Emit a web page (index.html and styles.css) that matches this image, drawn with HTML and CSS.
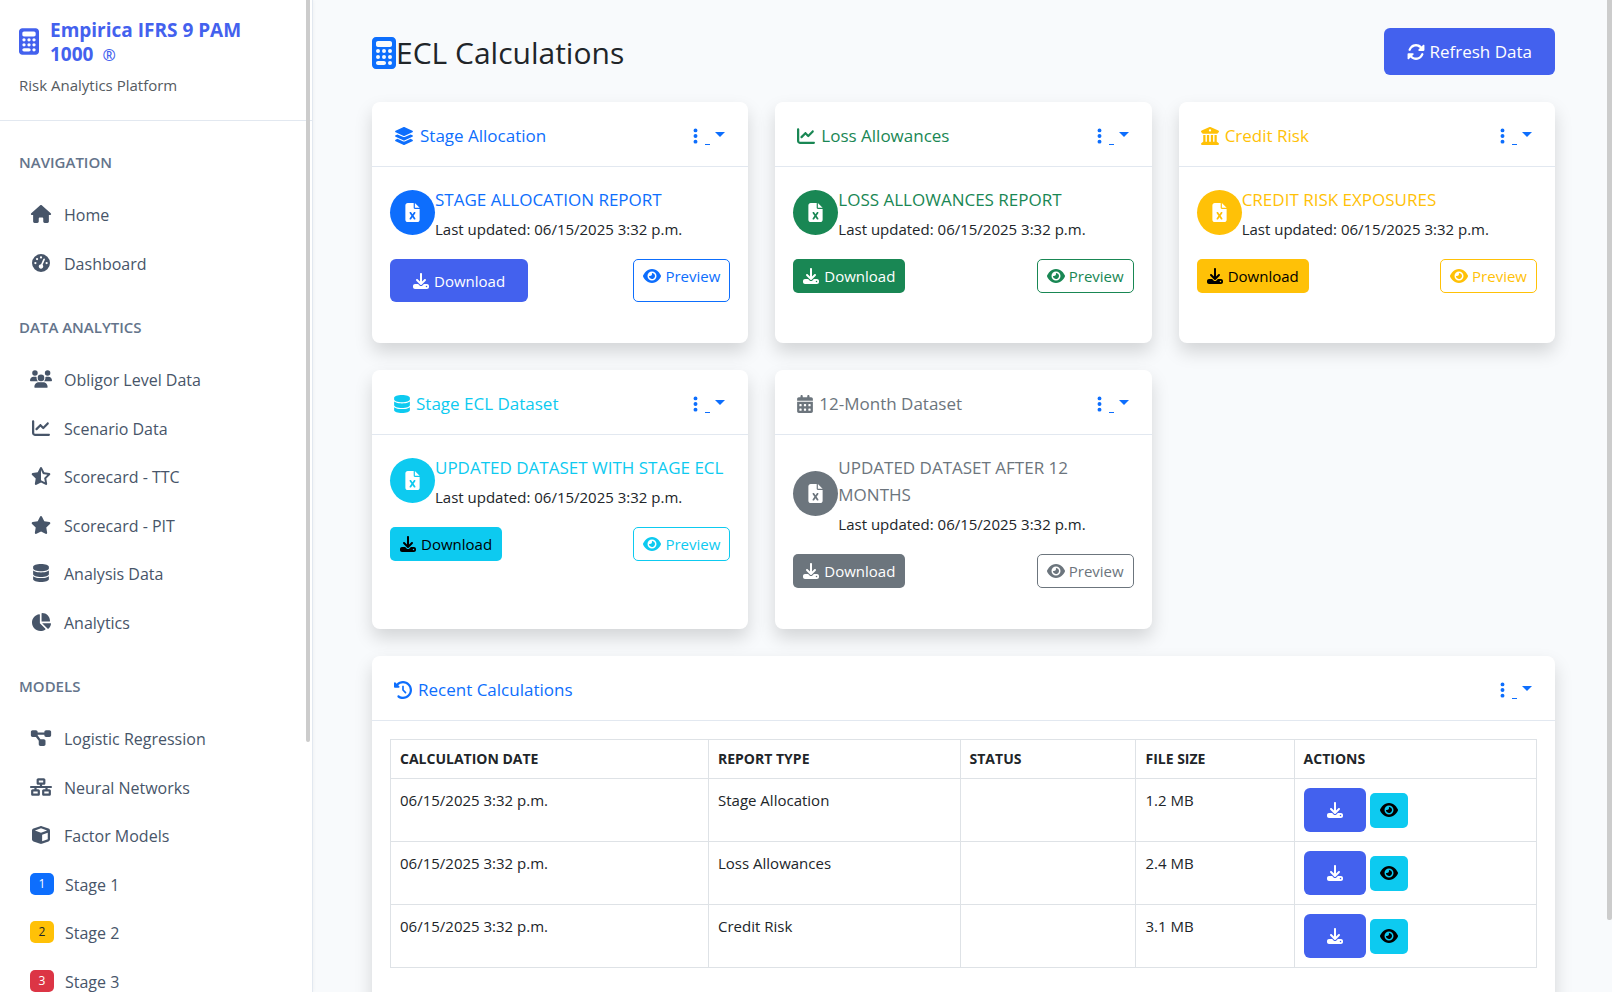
FILE: index.html
```html
<!DOCTYPE html>
<html lang="en">
<head>
<meta charset="utf-8">
<meta name="viewport" content="width=device-width, initial-scale=1">
<title>ECL Calculations</title>
<link rel="stylesheet" href="styles.css">
</head>
<body>
<svg class="sprite" aria-hidden="true">
<symbol id="calculator" viewBox="0 0 384 512"><path d="M64 0C28.700 0 0 28.700 0 64V448c0 35.300 28.700 64 64 64H320c35.300 0 64-28.700 64-64V64c0-35.300-28.700-64-64-64H64zM96 64H288c17.700 0 32 14.300 32 32v32c0 17.700-14.300 32-32 32H96c-17.700 0-32-14.300-32-32V96c0-17.700 14.300-32 32-32zm32 160a32 32 0 1 1 -64 0 32 32 0 1 1 64 0zM96 352a32 32 0 1 1 0-64 32 32 0 1 1 0 64zM64 416c0-17.700 14.300-32 32-32h96c17.700 0 32 14.300 32 32s-14.300 32-32 32H96c-17.700 0-32-14.300-32-32zM192 256a32 32 0 1 1 0-64 32 32 0 1 1 0 64zm32 64a32 32 0 1 1 -64 0 32 32 0 1 1 64 0zm64-64a32 32 0 1 1 0-64 32 32 0 1 1 0 64zm32 64a32 32 0 1 1 -64 0 32 32 0 1 1 64 0zM288 448a32 32 0 1 1 0-64 32 32 0 1 1 0 64z"/></symbol>
<symbol id="home" viewBox="0 0 576 512"><path d="M575.800 255.500c0 18-15 32.100-32 32.100h-32l.7 160.200c0 2.700-.2 5.400-.5 8.100V472c0 22.100-17.900 40-40 40H456c-1.100 0-2.200 0-3.300-.1c-1.400 .1-2.800 .1-4.200 .1H416 392c-22.100 0-40-17.900-40-40V448 384c0-17.700-14.300-32-32-32H256c-17.700 0-32 14.300-32 32v64 24c0 22.100-17.900 40-40 40H160 128.100c-1.500 0-3-.1-4.500-.2c-1.200 .1-2.400 .2-3.600 .2H104c-22.100 0-40-17.900-40-40V360c0-.9 0-1.900 .1-2.800V287.600H32c-18 0-32-14-32-32.100c0-9 3-17 10-24L266.400 8c7-7 15-8 22-8s15 2 21 7L564.800 231.500c8 7 12 15 11 24z"/></symbol>
<symbol id="gauge" viewBox="0 0 512 512"><path d="M0 256a256 256 0 1 1 512 0A256 256 0 1 1 0 256zM288 96a32 32 0 1 0 -64 0 32 32 0 1 0 64 0zM256 416c35.300 0 64-28.700 64-64c0-17.400-6.900-33.100-18.100-44.600L366 161.700c5.300-12.100-.2-26.300-12.300-31.600s-26.300 .2-31.600 12.300L257.900 288c-.6 0-1.300 0-1.900 0c-35.300 0-64 28.700-64 64s28.700 64 64 64zM176 144a32 32 0 1 0 -64 0 32 32 0 1 0 64 0zM96 288a32 32 0 1 0 0-64 32 32 0 1 0 0 64zm352-32a32 32 0 1 0 -64 0 32 32 0 1 0 64 0z"/></symbol>
<symbol id="users" viewBox="0 0 640 512"><path d="M144 0a80 80 0 1 1 0 160A80 80 0 1 1 144 0zM512 0a80 80 0 1 1 0 160A80 80 0 1 1 512 0zM0 298.700C0 239.800 47.800 192 106.700 192h42.700c15.900 0 31 3.500 44.600 9.700c-1.300 7.200-1.900 14.700-1.900 22.300c0 38.200 16.800 72.500 43.300 96c-.2 0-.4 0-.7 0H21.300C9.600 320 0 310.400 0 298.700zM405.300 320c-.2 0-.4 0-.7 0c26.600-23.500 43.300-57.800 43.300-96c0-7.600-.7-15-1.900-22.300c13.600-6.300 28.700-9.700 44.600-9.700h42.700C592.200 192 640 239.800 640 298.700c0 11.800-9.600 21.300-21.300 21.300H405.300zM224 224a96 96 0 1 1 192 0 96 96 0 1 1 -192 0zM128 485.300C128 411.700 187.700 352 261.300 352H378.700C452.300 352 512 411.700 512 485.300c0 14.700-11.900 26.700-26.700 26.700H154.700c-14.700 0-26.700-11.900-26.700-26.700z"/></symbol>
<symbol id="chart-line" viewBox="0 0 512 512"><path d="M64 64c0-17.700-14.300-32-32-32S0 46.300 0 64V400c0 44.200 35.800 80 80 80H480c17.700 0 32-14.300 32-32s-14.300-32-32-32H80c-8.800 0-16-7.200-16-16V64zm406.600 86.600c12.500-12.500 12.500-32.800 0-45.300s-32.800-12.500-45.300 0L320 210.700l-57.400-57.400c-12.500-12.500-32.800-12.500-45.300 0l-112 112c-12.500 12.500-12.500 32.800 0 45.300s32.800 12.500 45.300 0L240 221.300l57.400 57.400c12.500 12.500 32.800 12.500 45.300 0l128-128z"/></symbol>
<symbol id="star" viewBox="0 0 576 512"><path d="M316.900 18C311.600 7 300.400 0 288.100 0s-23.400 7-28.800 18L195 150.300 51.400 171.500c-12 1.800-22 10.200-25.700 21.700s-.7 24.200 7.900 32.700L137.800 329 113.200 474.700c-2 12 3 24.200 12.900 31.300s23 8 33.800 2.300l128.300-68.500 128.300 68.500c10.800 5.700 23.900 4.900 33.800-2.300s14.900-19.300 12.900-31.300L438.500 329 542.700 225.900c8.600-8.500 11.700-21.200 7.900-32.700s-13.700-19.900-25.700-21.700L381.200 150.300 316.900 18z"/></symbol>
<symbol id="star-half" viewBox="0 0 576 512"><path fill-rule="evenodd" d="M316.900 18C311.600 7 300.400 0 288.100 0s-23.400 7-28.800 18L195 150.300 51.400 171.500c-12 1.800-22 10.200-25.700 21.700s-.7 24.200 7.900 32.700L137.800 329 113.200 474.700c-2 12 3 24.200 12.900 31.300s23 8 33.800 2.300l128.300-68.500 128.300 68.500c10.800 5.700 23.900 4.900 33.800-2.300s14.900-19.300 12.900-31.300L438.500 329 542.700 225.900c8.600-8.500 11.700-21.200 7.900-32.700s-13.700-19.900-25.700-21.700L381.200 150.300 316.900 18zM288 376.400l.1-.1 26.400 14.100 85.200 45.500-16.500-97.600-4.800-28.700 20.700-20.500 70.100-69.300-96.100-14.200-29.300-4.300-12.900-26.600L288.100 86.900l-.1 .3V376.400z"/></symbol>
<symbol id="database" viewBox="0 0 448 512"><path d="M448 80v48c0 44.200-100.300 80-224 80S0 172.200 0 128V80C0 35.800 100.300 0 224 0S448 35.800 448 80zM393.200 214.700c20.800-7.400 39.900-16.900 54.800-28.600V288c0 44.200-100.300 80-224 80S0 332.200 0 288V186.100c14.900 11.800 34 21.200 54.800 28.600C99.700 230.700 159.500 240 224 240s124.300-9.300 169.200-25.300zM0 346.100c14.900 11.800 34 21.200 54.800 28.600C99.700 390.700 159.500 400 224 400s124.300-9.300 169.200-25.300c20.800-7.400 39.900-16.900 54.800-28.600V432c0 44.200-100.300 80-224 80S0 476.200 0 432V346.100z"/></symbol>
<symbol id="chart-pie" viewBox="0 0 576 512"><path d="M304 240V16.600c0-9 7-16.600 16-16.600C443.700 0 544 100.300 544 224c0 9-7.600 16-16.600 16H304zM32 272C32 150.700 122.100 50.300 239 34.300c9.200-1.300 17 6.100 17 15.400V288L412.500 444.500c6.700 6.700 6.200 17.700-1.500 23.100C371.800 495.600 323.800 512 272 512C139.500 512 32 404.600 32 272zm526.400 16c9.300 0 16.600 7.800 15.400 17c-7.700 55.900-34.600 105.600-73.900 142.300c-6 5.600-15.400 5.200-21.200-.7L320 288H558.400z"/></symbol>
<symbol id="diagram" viewBox="0 0 576 512"><path d="M0 80C0 53.500 21.500 32 48 32h96c26.500 0 48 21.500 48 48V96H384V80c0-26.500 21.500-48 48-48h96c26.500 0 48 21.500 48 48v96c0 26.500-21.500 48-48 48H432c-26.500 0-48-21.500-48-48V160H192v16c0 1.700-.1 3.400-.3 5L272 288h96c26.500 0 48 21.500 48 48v96c0 26.500-21.500 48-48 48H272c-26.500 0-48-21.500-48-48V336c0-1.700 .1-3.400 .3-5L144 224H48c-26.500 0-48-21.500-48-48V80z"/></symbol>
<symbol id="network" viewBox="0 0 640 512"><path d="M256 64H384v64H256V64zM240 0c-26.500 0-48 21.500-48 48v96c0 26.500 21.500 48 48 48h48v32H32c-17.700 0-32 14.300-32 32s14.300 32 32 32h96v32H80c-26.500 0-48 21.500-48 48v96c0 26.500 21.500 48 48 48H240c26.500 0 48-21.500 48-48V368c0-26.500-21.500-48-48-48H192V288H448v32H400c-26.500 0-48 21.500-48 48v96c0 26.500 21.500 48 48 48H560c26.500 0 48-21.500 48-48V368c0-26.500-21.500-48-48-48H512V288h96c17.700 0 32-14.300 32-32s-14.300-32-32-32H352V192h48c26.500 0 48-21.500 48-48V48c0-26.500-21.500-48-48-48H240zM96 448V384H224v64H96zm320-64H544v64H416V384z"/></symbol>
<symbol id="cube" viewBox="0 0 512 512"><path d="M234.500 5.700c13.900-5 29.100-5 43.100 0l192 68.600C495 83.400 512 107.500 512 134.600V377.400c0 27-17 51.200-42.500 60.300l-192 68.600c-13.900 5-29.100 5-43.100 0l-192-68.600C17 428.600 0 404.500 0 377.400V134.600c0-27 17-51.200 42.500-60.300l192-68.600zM256 66L82.300 128 256 190l173.700-62L256 66zm32 368.600l160-57.100v-188L288 246.600v188z"/></symbol>
<symbol id="layers" viewBox="0 0 576 512"><path d="M264.500 5.200c14.900-6.900 32.100-6.900 47 0l218.600 101c8.500 3.900 13.900 12.400 13.900 21.800s-5.400 17.900-13.900 21.800l-218.600 101c-14.900 6.900-32.100 6.900-47 0L45.900 149.800C37.400 145.800 32 137.300 32 128s5.400-17.900 13.900-21.800L264.500 5.200zM476.900 209.600l53.200 24.600c8.500 3.900 13.900 12.400 13.900 21.800s-5.400 17.900-13.900 21.800l-218.600 101c-14.900 6.900-32.100 6.900-47 0L45.900 277.800C37.400 273.800 32 265.300 32 256s5.400-17.900 13.900-21.800l53.200-24.600 152 70.200c23.400 10.800 50.400 10.800 73.800 0l152-70.200zm-152 198.200l152-70.200 53.200 24.600c8.500 3.900 13.900 12.400 13.900 21.800s-5.400 17.900-13.900 21.800l-218.600 101c-14.900 6.900-32.100 6.900-47 0L45.900 405.800C37.400 401.800 32 393.300 32 384s5.400-17.900 13.900-21.800l53.200-24.600 152 70.200c23.400 10.800 50.400 10.800 73.800 0z"/></symbol>
<symbol id="bank" viewBox="0 0 512 512"><path d="M243.400 2.600l-224 96c-14 6-21.800 21-18.700 35.800S16.800 160 32 160v8c0 13.300 10.700 24 24 24H456c13.300 0 24-10.700 24-24v-8c15.200 0 28.300-10.700 31.300-25.600s-4.800-29.900-18.700-35.800l-224-96c-8-3.400-17.200-3.400-25.200 0zM128 224H64V420.300c-.6 .3-1.200 .7-1.800 1.100l-48 32c-11.700 7.800-17 22.400-12.900 35.900S17.900 512 32 512H480c14.100 0 26.500-9.200 30.600-22.700s-1.100-28.100-12.900-35.900l-48-32c-.6-.4-1.200-.7-1.800-1.100V224H384V416H344V224H280V416H232V224H168V416H128V224zM256 64a32 32 0 1 1 0 64 32 32 0 1 1 0-64z"/></symbol>
<symbol id="calendar" viewBox="0 0 448 512"><path d="M128 0c17.700 0 32 14.300 32 32V64H288V32c0-17.700 14.300-32 32-32s32 14.300 32 32V64h48c26.500 0 48 21.500 48 48v48H0V112C0 85.500 21.500 64 48 64H96V32c0-17.700 14.300-32 32-32zM0 192H448V464c0 26.500-21.500 48-48 48H48c-26.500 0-48-21.500-48-48V192zm64 80v32c0 8.800 7.200 16 16 16h32c8.800 0 16-7.200 16-16V272c0-8.800-7.200-16-16-16H80c-8.800 0-16 7.200-16 16zm128 0v32c0 8.800 7.200 16 16 16h32c8.800 0 16-7.200 16-16V272c0-8.800-7.200-16-16-16H208c-8.800 0-16 7.200-16 16zm144-16c-8.800 0-16 7.200-16 16v32c0 8.800 7.200 16 16 16h32c8.800 0 16-7.200 16-16V272c0-8.800-7.200-16-16-16H336zM64 400v32c0 8.800 7.200 16 16 16h32c8.800 0 16-7.200 16-16V400c0-8.800-7.200-16-16-16H80c-8.800 0-16 7.200-16 16zm144-16c-8.800 0-16 7.200-16 16v32c0 8.800 7.200 16 16 16h32c8.800 0 16-7.200 16-16V400c0-8.800-7.200-16-16-16H208zm112 16v32c0 8.800 7.200 16 16 16h32c8.800 0 16-7.200 16-16V400c0-8.800-7.200-16-16-16H336c-8.800 0-16 7.200-16 16z"/></symbol>
<symbol id="history" viewBox="0 0 512 512"><path d="M75 75L41 41C25.900 25.900 0 36.600 0 57.900V168c0 13.300 10.700 24 24 24H134.100c21.400 0 32.100-25.900 17-41l-30.800-30.800C155 85.500 203 64 256 64c106 0 192 86 192 192s-86 192-192 192c-40.800 0-78.600-12.700-109.700-34.400c-14.500-10.100-34.400-6.600-44.600 7.900s-6.600 34.400 7.900 44.600C151.200 495 201.700 512 256 512c141.400 0 256-114.600 256-256S397.400 0 256 0C185.300 0 121.300 28.700 75 75zm181 53c-13.300 0-24 10.700-24 24V256c0 6.400 2.500 12.500 7 17l72 72c9.400 9.400 24.600 9.400 33.900 0s9.400-24.600 0-33.900l-65-65V152c0-13.300-10.700-24-24-24z"/></symbol>
<symbol id="download" viewBox="0 0 512 512"><path d="M288 32c0-17.700-14.300-32-32-32s-32 14.300-32 32V274.700l-73.400-73.400c-12.500-12.500-32.800-12.500-45.300 0s-12.500 32.800 0 45.300l128 128c12.500 12.500 32.800 12.500 45.300 0l128-128c12.500-12.500 12.500-32.800 0-45.300s-32.800-12.500-45.300 0L288 274.700V32zM64 352c-35.300 0-64 28.700-64 64v32c0 35.300 28.700 64 64 64H448c35.300 0 64-28.700 64-64V416c0-35.300-28.700-64-64-64H346.500l-45.300 45.300c-25 25-65.500 25-90.500 0L165.500 352H64zm368 56a24 24 0 1 1 0 48 24 24 0 1 1 0-48z"/></symbol>
<symbol id="eye" viewBox="0 0 576 512"><path d="M288 32c-80.800 0-145.500 36.800-192.600 80.600C48.600 156 17.300 208 2.500 243.700c-3.300 7.900-3.300 16.700 0 24.600C17.300 304 48.600 356 95.400 399.400C142.500 443.200 207.200 480 288 480s145.500-36.800 192.600-80.600c46.800-43.500 78.100-95.400 93-131.100c3.300-7.900 3.300-16.700 0-24.600c-14.900-35.700-46.200-87.700-93-131.100C433.500 68.800 368.800 32 288 32zM144 256a144 144 0 1 1 288 0 144 144 0 1 1 -288 0zm144-64c0 35.300-28.700 64-64 64c-7.100 0-13.900-1.200-20.300-3.300c-5.500-1.800-11.900 1.600-11.700 7.400c.3 6.900 1.300 13.800 3.200 20.700c13.700 51.200 66.400 81.600 117.600 67.900s81.600-66.400 67.900-117.600c-11.100-41.500-47.800-69.400-88.600-71.100c-5.800-.2-9.200 6.100-7.400 11.700c2.100 6.400 3.300 13.200 3.300 20.300z"/></symbol>
<symbol id="file" viewBox="0 0 384 512"><path d="M64 0C28.700 0 0 28.700 0 64V448c0 35.300 28.700 64 64 64H320c35.300 0 64-28.700 64-64V160H256c-17.700 0-32-14.300-32-32V0H64zM256 0V128H384L256 0zM155.700 250.200L192 302.100l36.300-51.900c7.600-10.900 22.600-13.500 33.400-5.900s13.500 22.600 5.900 33.400L221.300 344l46.400 66.200c7.600 10.900 5 25.800-5.900 33.400s-25.800 5-33.400-5.900L192 385.800l-36.300 51.900c-7.600 10.900-22.600 13.500-33.400 5.900s-13.500-22.600-5.900-33.400L162.700 344l-46.400-66.200c-7.600-10.900-5-25.800 5.900-33.400s25.800-5 33.400 5.900z"/></symbol>
<symbol id="refresh" viewBox="0 0 512 512"><path d="M142.900 142.900c-17.500 17.500-30.100 38-37.800 59.800c-5.900 16.700-24.200 25.400-40.800 19.500s-25.400-24.200-19.500-40.800C55.600 150.700 73.200 122 97.600 97.600c87.200-87.200 228.300-87.500 315.800-1L455 55c6.900-6.900 17.200-8.900 26.200-5.200s14.800 12.500 14.800 22.200v128c0 13.300-10.700 24-24 24h-8.400L344 224c-9.700 0-18.500-5.800-22.200-14.800s-1.700-19.300 5.200-26.200l41.100-41.100c-62.600-61.500-163.100-61.200-225.300 1zM16 312c0-13.300 10.700-24 24-24h7.600l.7 0L168 288c9.700 0 18.500 5.800 22.200 14.800s1.700 19.300-5.200 26.200l-41.100 41.100c62.600 61.500 163.100 61.200 225.300-1c17.500-17.500 30.100-38 37.800-59.800c5.900-16.700 24.200-25.400 40.800-19.500s25.400 24.200 19.500 40.800c-10.800 30.600-28.400 59.300-52.900 83.800c-87.200 87.200-228.300 87.500-315.800 1L57 457c-6.900 6.900-17.200 8.900-26.200 5.200S16 449.700 16 440V320.400l0-.7V312z"/></symbol>
<symbol id="dots" viewBox="0 0 128 512"><path d="M64 360a56 56 0 1 0 0 112 56 56 0 1 0 0-112zm0-160a56 56 0 1 0 0 112 56 56 0 1 0 0-112zM120 96A56 56 0 1 0 8 96a56 56 0 1 0 112 0z"/></symbol>
</svg>

<aside class="sidebar">
  <header class="brand">
    <div class="brand-row">
      <svg class="icon brand-icon"><use href="#calculator"/></svg>
      <strong class="brand-name">Empirica IFRS 9 PAM<br>1000 <span class="brand-mark">®</span></strong>
    </div>
    <p class="tagline">Risk Analytics Platform</p>
  </header>
  <nav class="nav">
    <h2 class="nav-heading">NAVIGATION</h2>
    <ul class="nav-list">
      <li><a class="nav-link" href="#"><svg class="icon nav-icon"><use href="#home"/></svg>Home</a></li>
      <li><a class="nav-link" href="#"><svg class="icon nav-icon"><use href="#gauge"/></svg>Dashboard</a></li>
    </ul>
    <h2 class="nav-heading">DATA ANALYTICS</h2>
    <ul class="nav-list">
      <li><a class="nav-link" href="#"><svg class="icon nav-icon"><use href="#users"/></svg>Obligor Level Data</a></li>
      <li><a class="nav-link" href="#"><svg class="icon nav-icon"><use href="#chart-line"/></svg>Scenario Data</a></li>
      <li><a class="nav-link" href="#"><svg class="icon nav-icon"><use href="#star-half"/></svg>Scorecard - TTC</a></li>
      <li><a class="nav-link" href="#"><svg class="icon nav-icon"><use href="#star"/></svg>Scorecard - PIT</a></li>
      <li><a class="nav-link" href="#"><svg class="icon nav-icon"><use href="#database"/></svg>Analysis Data</a></li>
      <li><a class="nav-link" href="#"><svg class="icon nav-icon"><use href="#chart-pie"/></svg>Analytics</a></li>
    </ul>
    <h2 class="nav-heading">MODELS</h2>
    <ul class="nav-list">
      <li><a class="nav-link" href="#"><svg class="icon nav-icon"><use href="#diagram"/></svg>Logistic Regression</a></li>
      <li><a class="nav-link" href="#"><svg class="icon nav-icon"><use href="#network"/></svg>Neural Networks</a></li>
      <li><a class="nav-link" href="#"><svg class="icon nav-icon"><use href="#cube"/></svg>Factor Models</a></li>
      <li><a class="nav-link" href="#"><span class="badge badge-primary">1</span>Stage 1</a></li>
      <li><a class="nav-link" href="#"><span class="badge badge-warning">2</span>Stage 2</a></li>
      <li><a class="nav-link" href="#"><span class="badge badge-danger">3</span>Stage 3</a></li>
    </ul>
  </nav>
  <div class="thumb thumb-side"></div>
</aside>

<main class="main">
  <div class="page-head">
    <h1 class="page-title"><svg class="icon page-icon"><use href="#calculator"/></svg>ECL Calculations</h1>
    <button class="btn btn-brand btn-large" type="button"><svg class="icon icon-18"><use href="#refresh"/></svg>Refresh Data</button>
  </div>

  <div class="cards">
    <section class="card tone-primary">
      <header class="card-head">
        <h2 class="card-title"><svg class="icon icon-20"><use href="#layers"/></svg>Stage Allocation</h2>
        <a class="menu" href="#" aria-label="Options"><svg class="icon menu-dots"><use href="#dots"/></svg><span class="menu-line"></span><span class="caret"></span></a>
      </header>
      <div class="card-body">
        <div class="report">
          <span class="disc"><svg class="icon file-icon"><use href="#file"/></svg></span>
          <div><h3 class="report-title">STAGE ALLOCATION REPORT</h3><p class="report-date">Last updated: 06/15/2025 3:32 p.m.</p></div>
        </div>
        <div class="actions">
          <button class="btn btn-brand" type="button"><svg class="icon icon-16"><use href="#download"/></svg>Download</button>
          <button class="btn btn-outline" type="button"><svg class="icon icon-18"><use href="#eye"/></svg>Preview</button>
        </div>
      </div>
    </section>

    <section class="card tone-success">
      <header class="card-head">
        <h2 class="card-title"><svg class="icon icon-18"><use href="#chart-line"/></svg>Loss Allowances</h2>
        <a class="menu" href="#" aria-label="Options"><svg class="icon menu-dots"><use href="#dots"/></svg><span class="menu-line"></span><span class="caret"></span></a>
      </header>
      <div class="card-body">
        <div class="report">
          <span class="disc"><svg class="icon file-icon"><use href="#file"/></svg></span>
          <div><h3 class="report-title">LOSS ALLOWANCES REPORT</h3><p class="report-date">Last updated: 06/15/2025 3:32 p.m.</p></div>
        </div>
        <div class="actions">
          <button class="btn btn-solid" type="button"><svg class="icon icon-16"><use href="#download"/></svg>Download</button>
          <button class="btn btn-outline" type="button"><svg class="icon icon-18"><use href="#eye"/></svg>Preview</button>
        </div>
      </div>
    </section>

    <section class="card tone-warning">
      <header class="card-head">
        <h2 class="card-title"><svg class="icon icon-18"><use href="#bank"/></svg>Credit Risk</h2>
        <a class="menu" href="#" aria-label="Options"><svg class="icon menu-dots"><use href="#dots"/></svg><span class="menu-line"></span><span class="caret"></span></a>
      </header>
      <div class="card-body">
        <div class="report">
          <span class="disc"><svg class="icon file-icon"><use href="#file"/></svg></span>
          <div><h3 class="report-title">CREDIT RISK EXPOSURES</h3><p class="report-date">Last updated: 06/15/2025 3:32 p.m.</p></div>
        </div>
        <div class="actions">
          <button class="btn btn-solid" type="button"><svg class="icon icon-16"><use href="#download"/></svg>Download</button>
          <button class="btn btn-outline" type="button"><svg class="icon icon-18"><use href="#eye"/></svg>Preview</button>
        </div>
      </div>
    </section>

    <section class="card tone-info">
      <header class="card-head">
        <h2 class="card-title"><svg class="icon icon-16 tall"><use href="#database"/></svg>Stage ECL Dataset</h2>
        <a class="menu" href="#" aria-label="Options"><svg class="icon menu-dots"><use href="#dots"/></svg><span class="menu-line"></span><span class="caret"></span></a>
      </header>
      <div class="card-body">
        <div class="report">
          <span class="disc"><svg class="icon file-icon"><use href="#file"/></svg></span>
          <div><h3 class="report-title">UPDATED DATASET WITH STAGE ECL</h3><p class="report-date">Last updated: 06/15/2025 3:32 p.m.</p></div>
        </div>
        <div class="actions">
          <button class="btn btn-solid" type="button"><svg class="icon icon-16"><use href="#download"/></svg>Download</button>
          <button class="btn btn-outline" type="button"><svg class="icon icon-18"><use href="#eye"/></svg>Preview</button>
        </div>
      </div>
    </section>

    <section class="card tone-secondary">
      <header class="card-head">
        <h2 class="card-title"><svg class="icon icon-16 tall"><use href="#calendar"/></svg>12-Month Dataset</h2>
        <a class="menu" href="#" aria-label="Options"><svg class="icon menu-dots"><use href="#dots"/></svg><span class="menu-line"></span><span class="caret"></span></a>
      </header>
      <div class="card-body">
        <div class="report">
          <span class="disc"><svg class="icon file-icon"><use href="#file"/></svg></span>
          <div><h3 class="report-title">UPDATED DATASET AFTER 12<br>MONTHS</h3><p class="report-date">Last updated: 06/15/2025 3:32 p.m.</p></div>
        </div>
        <div class="actions">
          <button class="btn btn-solid" type="button"><svg class="icon icon-16"><use href="#download"/></svg>Download</button>
          <button class="btn btn-outline" type="button"><svg class="icon icon-18"><use href="#eye"/></svg>Preview</button>
        </div>
      </div>
    </section>

    <section class="card card-wide tone-primary">
      <header class="card-head">
        <h2 class="card-title"><svg class="icon icon-18"><use href="#history"/></svg>Recent Calculations</h2>
        <a class="menu" href="#" aria-label="Options"><svg class="icon menu-dots"><use href="#dots"/></svg><span class="menu-line"></span><span class="caret"></span></a>
      </header>
      <div class="card-body">
        <table class="table">
          <colgroup><col class="col-date"><col class="col-type"><col class="col-status"><col class="col-size"><col></colgroup>
          <thead>
            <tr><th>CALCULATION DATE</th><th>REPORT TYPE</th><th>STATUS</th><th>FILE SIZE</th><th>ACTIONS</th></tr>
          </thead>
          <tbody>
            <tr><td>06/15/2025 3:32 p.m.</td><td>Stage Allocation</td><td></td><td>1.2 MB</td>
              <td><div class="row-actions"><button class="btn btn-brand" type="button" aria-label="Download"><svg class="icon icon-16"><use href="#download"/></svg></button><button class="btn btn-view" type="button" aria-label="Preview"><svg class="icon icon-18"><use href="#eye"/></svg></button></div></td></tr>
            <tr><td>06/15/2025 3:32 p.m.</td><td>Loss Allowances</td><td></td><td>2.4 MB</td>
              <td><div class="row-actions"><button class="btn btn-brand" type="button" aria-label="Download"><svg class="icon icon-16"><use href="#download"/></svg></button><button class="btn btn-view" type="button" aria-label="Preview"><svg class="icon icon-18"><use href="#eye"/></svg></button></div></td></tr>
            <tr><td>06/15/2025 3:32 p.m.</td><td>Credit Risk</td><td></td><td>3.1 MB</td>
              <td><div class="row-actions"><button class="btn btn-brand" type="button" aria-label="Download"><svg class="icon icon-16"><use href="#download"/></svg></button><button class="btn btn-view" type="button" aria-label="Preview"><svg class="icon icon-18"><use href="#eye"/></svg></button></div></td></tr>
          </tbody>
        </table>
      </div>
    </section>
  </div>
  <div class="thumb thumb-page"></div>
</main>
</body>
</html>
```

FILE: styles.css
```css
* {
  box-sizing: border-box;
}

body {
  margin: 0;
  display: flex;
  height: 100vh;
  overflow: hidden;
  background: #f8fafc;
  color: #212529;
  font-family: "Open Sans", "Noto Sans", sans-serif;
  font-size: 15px;
  line-height: 24px;
}

h1, h2, h3, p, ul {
  margin: 0;
  padding: 0;
  font-weight: 400;
}

ul {
  list-style: none;
}

a {
  text-decoration: none;
}

.sprite {
  position: absolute;
  width: 0;
  height: 0;
}

.icon {
  display: block;
  flex: none;
  fill: currentColor;
}

.icon-16 {
  width: 16px;
  height: 16px;
}

.icon-18 {
  width: 18px;
  height: 18px;
}

.icon-20 {
  width: 20px;
  height: 18px;
}

.tall {
  height: 18px;
}

/* Sidebar */

.sidebar {
  position: relative;
  flex: none;
  width: 313px;
  height: 100vh;
  overflow: hidden;
  background: #fff;
  border-right: 1px solid #e2e8f0;
  box-shadow: 0 0 4px rgba(0, 0, 0, 0.05);
}

.brand {
  padding: 18px 19px 23px;
  border-bottom: 1px solid #e2e8f0;
}

.brand-row {
  display: flex;
  align-items: center;
  gap: 11px;
  color: #4361ee;
}

.brand-icon {
  width: 20px;
  height: 27px;
  margin-bottom: 3px;
}

.brand-name {
  font-size: 19px;
  line-height: 24px;
}

.brand-mark {
  margin-left: 4px;
  font-size: 16px;
  font-weight: 600;
}

.tagline {
  margin-top: 6px;
  color: #555b61;
  font-size: 15px;
}

.nav {
  padding-top: 30px;
}

.nav-heading {
  padding: 0 19px;
  margin-bottom: 18px;
  color: #64748b;
  font-size: 15px;
  font-weight: 600;
  line-height: 22px;
}

.nav-list {
  margin-bottom: 28px;
}

.nav-link {
  display: flex;
  align-items: center;
  gap: 12px;
  padding: 12px 30px;
  color: #475569;
  font-size: 16px;
  line-height: 24px;
}

.nav-list li:nth-child(even) {
  padding-top: 1px;
}

.nav-icon {
  width: 22px;
  height: 18px;
  margin-bottom: 2px;
}

.badge {
  width: 24px;
  height: 22px;
  margin: 0 -1px 2px 0;
  border-radius: 5px;
  font-size: 12px;
  line-height: 22px;
  text-align: center;
}

.badge-primary {
  background: #0d6efd;
  color: #fff;
}

.badge-warning {
  background: #ffc107;
  color: #212529;
}

.badge-danger {
  background: #dc3545;
  color: #fff;
}

.thumb {
  position: absolute;
  top: 0;
  border-radius: 0 0 2px 2px;
  background: #ccc;
}

.thumb-side {
  right: 2px;
  width: 4px;
  height: 742px;
}

.thumb-page {
  right: 0;
  width: 5px;
  height: 920px;
}

/* Main column */

.main {
  position: relative;
  flex: 1;
  min-width: 0;
  height: 100vh;
  overflow: hidden;
  padding: 28px 57px 0 59px;
}

.page-head {
  display: flex;
  align-items: center;
  justify-content: space-between;
  margin-bottom: 27px;
}

.page-title {
  display: flex;
  align-items: center;
  padding-top: 2px;
  font-size: 30px;
  line-height: 40px;
}

.page-icon {
  width: 24px;
  height: 32px;
  color: #0d6efd;
}

.cards {
  display: grid;
  grid-template-columns: repeat(3, 1fr);
  gap: 27px;
}

.card {
  border-radius: 8px;
  background: #fff;
  box-shadow: 0 9px 18px rgba(0, 0, 0, 0.15);
}

.card-wide {
  grid-column: 1 / -1;
}

.card-head {
  display: flex;
  align-items: center;
  justify-content: space-between;
  height: 65px;
  padding: 3px 23px 0 22px;
  border-bottom: 1px solid #e2e8f0;
}

.card-title {
  display: flex;
  align-items: center;
  gap: 6px;
  color: var(--tone);
  font-size: 17px;
}

.menu {
  display: flex;
  align-items: center;
  color: #0d6efd;
}

.menu-dots {
  width: 5px;
  height: 18px;
}

.menu-line {
  width: 5px;
  height: 18px;
  margin: 0 5px 0 7px;
  border-bottom: 1px solid #0d6efd;
}

.caret {
  height: 7px;
  border-top: 5px solid;
  border-left: 5px solid transparent;
  border-right: 5px solid transparent;
}

.card-body {
  padding: 18px 18px 41px;
}

.report {
  display: flex;
  align-items: center;
  margin-bottom: 18px;
}

.disc {
  display: flex;
  align-items: center;
  justify-content: center;
  flex: none;
  width: 45px;
  height: 45px;
  margin-bottom: 2px;
  border-radius: 50%;
  background: var(--tone);
  color: #fff;
}

.file-icon {
  width: 15px;
  height: 19px;
}

.report-title {
  padding-top: 1px;
  margin-bottom: 4px;
  color: var(--tone);
  font-size: 17px;
  line-height: 27px;
}

.report-date {
  font-size: 15px;
  line-height: 24px;
}

.actions {
  display: flex;
  justify-content: space-between;
}

/* Buttons */

.btn {
  display: flex;
  align-items: center;
  gap: 5px;
  padding: 4px 9px;
  border: 1px solid transparent;
  border-radius: 5px;
  font-family: inherit;
  font-size: 15px;
  line-height: 24px;
  cursor: pointer;
}

.btn-brand {
  min-height: 43px;
  padding: 8px 22px;
  border-radius: 6px;
  background: #4361ee;
  color: #fff;
}

.btn-large {
  height: 47px;
  padding: 10px 22px;
  font-size: 17px;
}

.btn-solid {
  background: var(--tone);
  color: var(--on-tone);
}

.btn-outline {
  align-items: flex-start;
  gap: 4px;
  border-color: var(--tone);
  background: #fff;
  color: var(--tone);
}

.btn-outline .icon {
  margin-top: 3px;
}

.btn-view {
  height: 35px;
  background: #0dcaf0;
  color: #000;
}

.row-actions {
  display: flex;
  align-items: center;
  gap: 4px;
  height: 44px;
}

.row-actions .btn-brand {
  height: 44px;
}

/* Tones */

.tone-primary {
  --tone: #0d6efd;
  --on-tone: #fff;
}

.tone-success {
  --tone: #198754;
  --on-tone: #fff;
}

.tone-warning {
  --tone: #ffc107;
  --on-tone: #000;
}

.tone-info {
  --tone: #0dcaf0;
  --on-tone: #000;
}

.tone-secondary {
  --tone: #6c757d;
  --on-tone: #fff;
}

/* Table */

.table {
  width: 100%;
  table-layout: fixed;
  border-collapse: collapse;
}

.table th,
.table td {
  padding: 9px;
  border: 1px solid #dee2e6;
  text-align: left;
  vertical-align: top;
  font-size: 15px;
}

.table th {
  font-size: 14px;
  font-weight: 700;
  line-height: 20px;
}

.col-date {
  width: 27.75%;
}

.col-type {
  width: 21.95%;
}

.col-status {
  width: 15.35%;
}

.col-size {
  width: 13.8%;
}
```
